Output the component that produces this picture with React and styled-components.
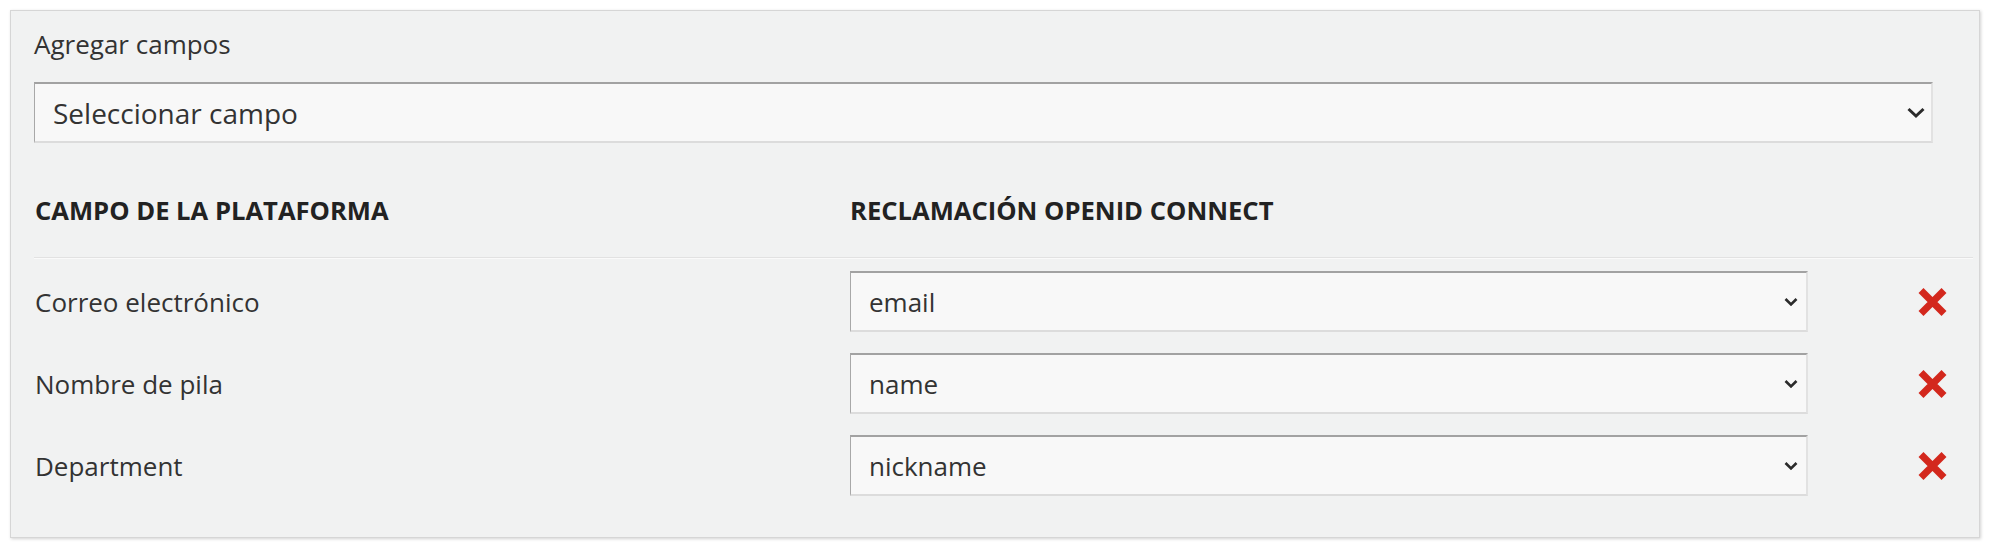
import React from "react";
import styled, { createGlobalStyle } from "styled-components";

const GlobalStyle = createGlobalStyle`
  body {
    margin: 0;
    background: #ffffff;
    font-family: "Open Sans", "Liberation Sans", sans-serif;
    color: #333333;
  }
`;

const Panel = styled.section`
  margin: 10px;
  padding: 15px 6px 31px 23px;
  background: #f1f2f2;
  border: 1px solid #d6d6d6;
  box-shadow: 1px 1px 3px rgba(0, 0, 0, 0.18);
`;

const Label = styled.div`
  font-size: 26px;
  line-height: 36px;
  color: #333;
`;

const SelectWrap = styled.div`
  position: relative;
  margin-top: ${(p) => p.$top || 0}px;
  margin-right: ${(p) => p.$right || 0}px;
`;

const Select = styled.select`
  appearance: none;
  -webkit-appearance: none;
  display: block;
  width: 100%;
  height: 61px;
  box-sizing: border-box;
  margin: 0;
  padding: 0 40px 0 18px;
  font-family: "Open Sans", "Liberation Sans", sans-serif;
  font-size: ${(p) => p.$size}px;
  color: #333;
  background: #f8f8f8;
  border-style: solid;
  border-width: 2px 2px 2px 1px;
  border-color: #a2a2a2 #e2e2e2 #dcdcdc #a8a8a8;
  border-radius: 0;
  outline: none;
`;

const Chevron = styled.svg`
  position: absolute;
  right: 8px;
  top: 50%;
  transform: translateY(-50%);
  pointer-events: none;
`;

const Table = styled.div`
  display: grid;
  grid-template-columns: 815px 959px 1fr;
`;

const HeadCell = styled.div`
  padding: 50px 0 28px 1px;
  font-size: 25.6px;
  line-height: 36px;
  font-weight: 700;
  color: #222;
  text-transform: uppercase;
  border-bottom: 1px solid #e2e2e2;
  box-shadow: 0 1px 0 #fafafa;
`;

const Cell = styled.div`
  display: flex;
  align-items: center;
  justify-content: ${(p) => (p.$end ? "flex-end" : "flex-start")};
  padding: 11px ${(p) => (p.$end ? 25 : 0)}px 10px 1px;
  font-size: 26px;
  line-height: 36px;
  color: #333;

  &:nth-child(-n + 6) {
    padding-top: 13px;
  }
`;

const Field = styled.div`
  flex: 1;
  position: relative;
`;

const RemoveButton = styled.button`
  display: flex;
  padding: 0;
  border: 0;
  background: none;
  cursor: pointer;
`;

const DropdownSelect = ({ value, options, size, top, right, chevron }) => (
  <SelectWrap $top={top} $right={right}>
    <Select $size={size} defaultValue={value}>
      {options.map((o) => (
        <option key={o}>{o}</option>
      ))}
    </Select>
    {chevron === "big" ? (
      <Chevron width="18" height="11" viewBox="0 0 18 11" style={{ right: 8 }}>
        <path d="M1.5 1.5 L9 8.5 L16.5 1.5" fill="none" stroke="#2b2b2b" strokeWidth="3" />
      </Chevron>
    ) : (
      <Chevron width="14" height="9" viewBox="0 0 14 9" style={{ right: 10 }}>
        <path d="M1.5 1.5 L7 7 L12.5 1.5" fill="none" stroke="#2b2b2b" strokeWidth="2.6" />
      </Chevron>
    )}
  </SelectWrap>
);

const XIcon = () => (
  <svg width="31" height="30" viewBox="0 0 31 30">
    <path d="M4 3.5 L27 26.5 M27 3.5 L4 26.5" stroke="#d3281d" strokeWidth="7" fill="none" />
  </svg>
);

const claims = ["email", "name", "nickname", "given_name", "family_name"];

const mappings = [
  { label: "Correo electrónico", claim: "email" },
  { label: "Nombre de pila", claim: "name" },
  { label: "Department", claim: "nickname" },
];

export default function App() {
  return (
    <>
      <GlobalStyle />
      <Panel>
        <Label>Agregar campos</Label>
        <DropdownSelect
          value="Seleccionar campo"
          options={["Seleccionar campo", "Apellido", "Teléfono"]}
          size={28}
          top={20}
          right={40}
          chevron="big"
        />
        <Table>
          <HeadCell>Campo de la plataforma</HeadCell>
          <HeadCell>Reclamación OpenID Connect</HeadCell>
          <HeadCell />
          {mappings.map((m) => (
            <React.Fragment key={m.label}>
              <Cell>{m.label}</Cell>
              <Cell>
                <Field>
                  <DropdownSelect value={m.claim} options={claims} size={26} />
                </Field>
              </Cell>
              <Cell $end>
                <RemoveButton aria-label="Eliminar">
                  <XIcon />
                </RemoveButton>
              </Cell>
            </React.Fragment>
          ))}
        </Table>
      </Panel>
    </>
  );
}
